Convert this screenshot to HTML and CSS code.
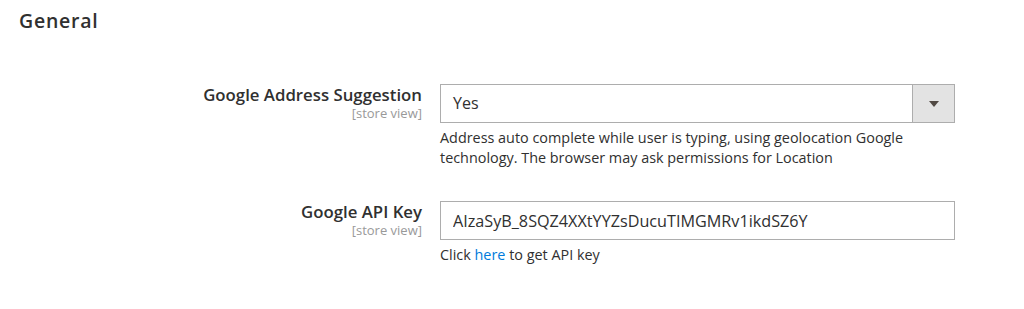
FILE: index.html
```html
<!DOCTYPE html>
<html lang="en">
<head>
  <meta charset="UTF-8" />
  <title>Configuration - General</title>
  <link rel="stylesheet" href="styles.css">
</head>
<body>
  <section class="config-section">
    <h2 class="section-title">General</h2>

    <div class="field-row">
      <div class="field-label">
        <span class="label-text">Google Address Suggestion</span>
        <span class="scope">[store view]</span>
      </div>
      <div class="field-control">
        <div class="select">
          <span class="select-value">Yes</span>
          <span class="select-button"><span class="arrow"></span></span>
        </div>
        <p class="note">Address auto complete while user is typing, using geolocation Google technology. The browser may ask permissions for Location</p>
      </div>
    </div>

    <div class="field-row">
      <div class="field-label">
        <span class="label-text">Google API Key</span>
        <span class="scope">[store view]</span>
      </div>
      <div class="field-control">
        <input class="text-input" type="text" value="AIzaSyB_8SQZ4XXtYYZsDucuTIMGMRv1ikdSZ6Y">
        <p class="note">Click <a href="#">here</a> to get API key</p>
      </div>
    </div>
  </section>
</body>
</html>
```

FILE: styles.css
```css
* {
  box-sizing: border-box;
}

body {
  margin: 0;
  background: #fff;
  font-family: 'Open Sans', 'Liberation Sans', sans-serif;
  color: #303030;
}

.config-section {
  padding: 8px 0 0 19px;
}

.section-title {
  margin: 0 0 50px;
  font-size: 19.5px;
  font-weight: 600;
  letter-spacing: 0.75px;
  color: #303030;
  line-height: 26px;
}

.field-row {
  display: flex;
  gap: 18px;
  margin-bottom: 33px;
}

.field-label {
  width: 403px;
  display: flex;
  flex-direction: column;
  align-items: flex-end;
}

.label-text {
  font-size: 16.8px;
  font-weight: 600;
  line-height: 22px;
}

.scope {
  font-size: 13px;
  color: #999;
  line-height: 14px;
}

.field-control {
  width: 515px;
}

.select {
  display: flex;
  height: 39px;
  border: 1px solid #adadad;
}

.select-value {
  flex: 1;
  font-size: 16px;
  line-height: 37px;
  padding-left: 12px;
}

.select-button {
  width: 42px;
  background: #e3e3e3;
  border-left: 1px solid #adadad;
  display: flex;
  align-items: center;
  justify-content: center;
}

.arrow {
  width: 0;
  height: 0;
  border-left: 5px solid transparent;
  border-right: 5px solid transparent;
  border-top: 6px solid #514943;
}

.text-input {
  display: block;
  width: 100%;
  height: 39px;
  border: 1px solid #adadad;
  padding: 0 12px;
  font-family: inherit;
  font-size: 16.2px;
  color: #303030;
  outline: none;
}

.note {
  margin: 5px 0 0;
  font-size: 14.4px;
  line-height: 20px;
}

.note a {
  color: #007bdb;
  text-decoration: none;
}
```
